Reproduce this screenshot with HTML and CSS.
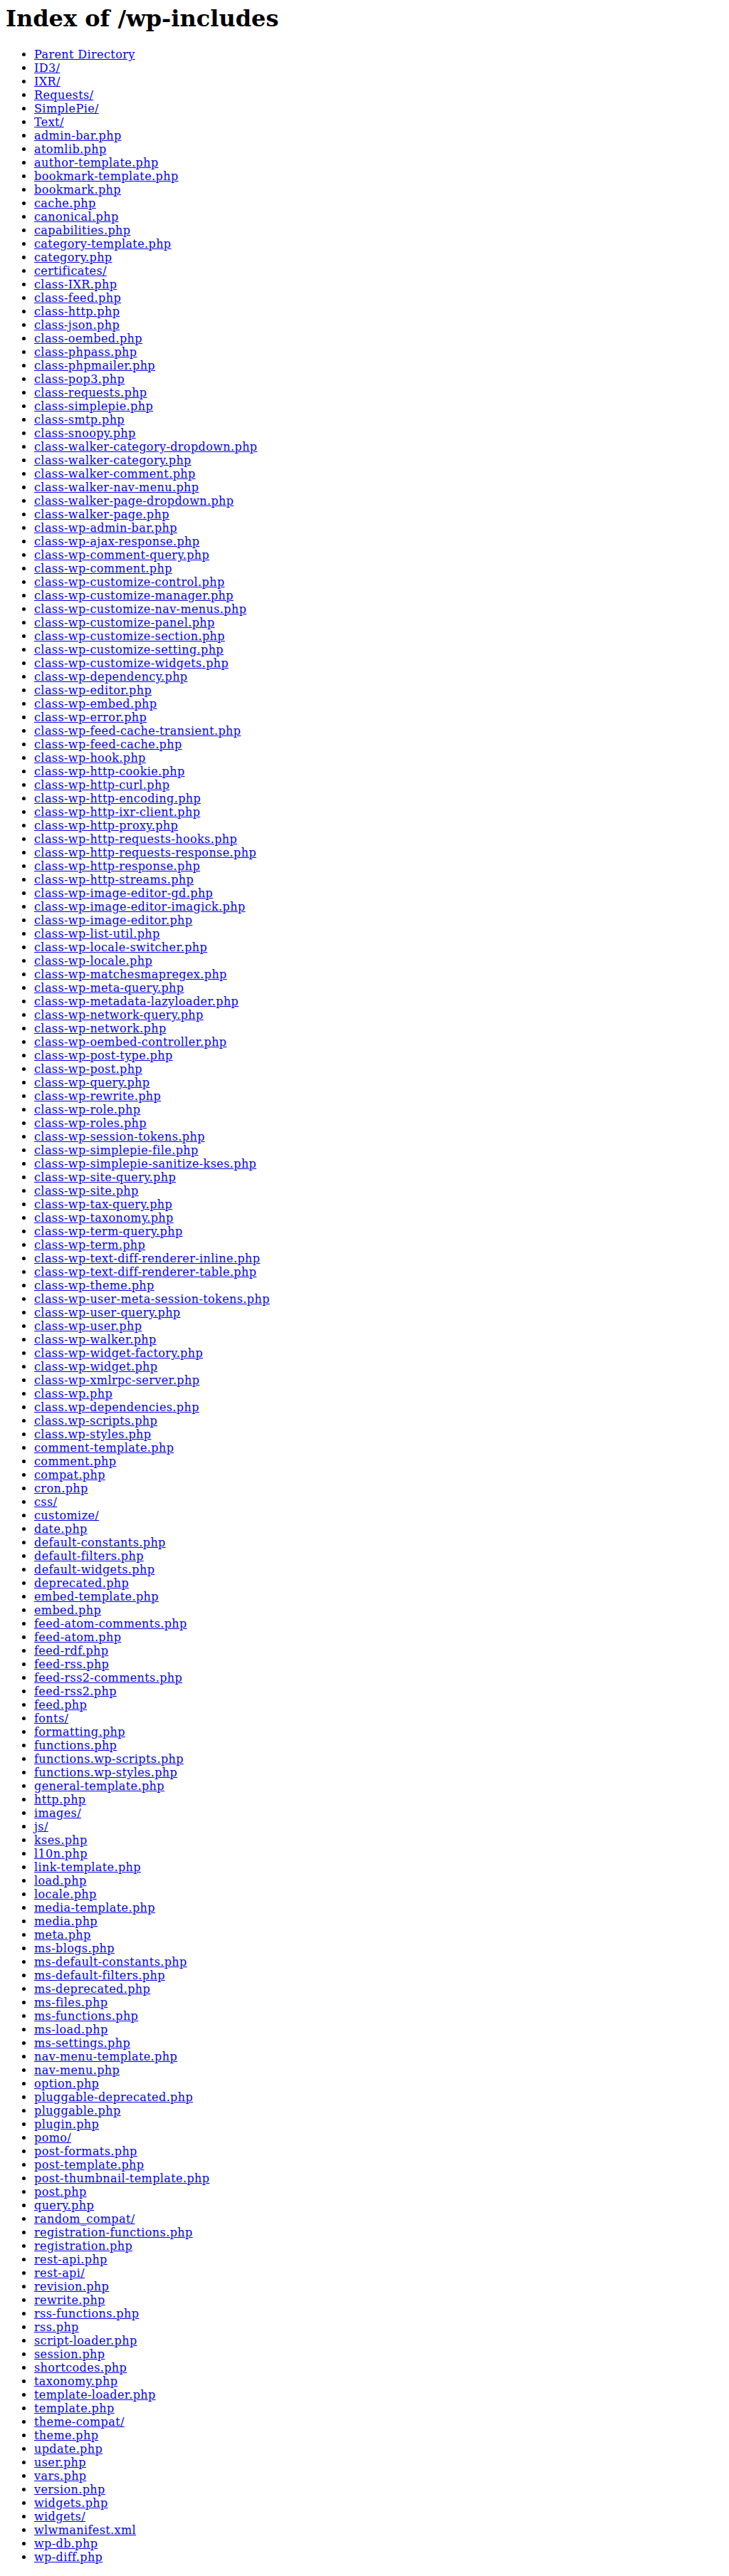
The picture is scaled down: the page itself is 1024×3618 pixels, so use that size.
FILE: index.html
```
<!DOCTYPE html>
<html>
<head>
<meta charset="utf-8">
<title>Index of /wp-includes</title>
<link rel="stylesheet" href="styles.css">
</head>
<body class="page">
<h1 class="title">Index of /wp-includes</h1>
<ul class="listing">
<li><a href="/">Parent Directory</a></li>
<li><a href="ID3/">ID3/</a></li>
<li><a href="IXR/">IXR/</a></li>
<li><a href="Requests/">Requests/</a></li>
<li><a href="SimplePie/">SimplePie/</a></li>
<li><a href="Text/">Text/</a></li>
<li><a href="admin-bar.php">admin-bar.php</a></li>
<li><a href="atomlib.php">atomlib.php</a></li>
<li><a href="author-template.php">author-template.php</a></li>
<li><a href="bookmark-template.php">bookmark-template.php</a></li>
<li><a href="bookmark.php">bookmark.php</a></li>
<li><a href="cache.php">cache.php</a></li>
<li><a href="canonical.php">canonical.php</a></li>
<li><a href="capabilities.php">capabilities.php</a></li>
<li><a href="category-template.php">category-template.php</a></li>
<li><a href="category.php">category.php</a></li>
<li><a href="certificates/">certificates/</a></li>
<li><a href="class-IXR.php">class-IXR.php</a></li>
<li><a href="class-feed.php">class-feed.php</a></li>
<li><a href="class-http.php">class-http.php</a></li>
<li><a href="class-json.php">class-json.php</a></li>
<li><a href="class-oembed.php">class-oembed.php</a></li>
<li><a href="class-phpass.php">class-phpass.php</a></li>
<li><a href="class-phpmailer.php">class-phpmailer.php</a></li>
<li><a href="class-pop3.php">class-pop3.php</a></li>
<li><a href="class-requests.php">class-requests.php</a></li>
<li><a href="class-simplepie.php">class-simplepie.php</a></li>
<li><a href="class-smtp.php">class-smtp.php</a></li>
<li><a href="class-snoopy.php">class-snoopy.php</a></li>
<li><a href="class-walker-category-dropdown.php">class-walker-category-dropdown.php</a></li>
<li><a href="class-walker-category.php">class-walker-category.php</a></li>
<li><a href="class-walker-comment.php">class-walker-comment.php</a></li>
<li><a href="class-walker-nav-menu.php">class-walker-nav-menu.php</a></li>
<li><a href="class-walker-page-dropdown.php">class-walker-page-dropdown.php</a></li>
<li><a href="class-walker-page.php">class-walker-page.php</a></li>
<li><a href="class-wp-admin-bar.php">class-wp-admin-bar.php</a></li>
<li><a href="class-wp-ajax-response.php">class-wp-ajax-response.php</a></li>
<li><a href="class-wp-comment-query.php">class-wp-comment-query.php</a></li>
<li><a href="class-wp-comment.php">class-wp-comment.php</a></li>
<li><a href="class-wp-customize-control.php">class-wp-customize-control.php</a></li>
<li><a href="class-wp-customize-manager.php">class-wp-customize-manager.php</a></li>
<li><a href="class-wp-customize-nav-menus.php">class-wp-customize-nav-menus.php</a></li>
<li><a href="class-wp-customize-panel.php">class-wp-customize-panel.php</a></li>
<li><a href="class-wp-customize-section.php">class-wp-customize-section.php</a></li>
<li><a href="class-wp-customize-setting.php">class-wp-customize-setting.php</a></li>
<li><a href="class-wp-customize-widgets.php">class-wp-customize-widgets.php</a></li>
<li><a href="class-wp-dependency.php">class-wp-dependency.php</a></li>
<li><a href="class-wp-editor.php">class-wp-editor.php</a></li>
<li><a href="class-wp-embed.php">class-wp-embed.php</a></li>
<li><a href="class-wp-error.php">class-wp-error.php</a></li>
<li><a href="class-wp-feed-cache-transient.php">class-wp-feed-cache-transient.php</a></li>
<li><a href="class-wp-feed-cache.php">class-wp-feed-cache.php</a></li>
<li><a href="class-wp-hook.php">class-wp-hook.php</a></li>
<li><a href="class-wp-http-cookie.php">class-wp-http-cookie.php</a></li>
<li><a href="class-wp-http-curl.php">class-wp-http-curl.php</a></li>
<li><a href="class-wp-http-encoding.php">class-wp-http-encoding.php</a></li>
<li><a href="class-wp-http-ixr-client.php">class-wp-http-ixr-client.php</a></li>
<li><a href="class-wp-http-proxy.php">class-wp-http-proxy.php</a></li>
<li><a href="class-wp-http-requests-hooks.php">class-wp-http-requests-hooks.php</a></li>
<li><a href="class-wp-http-requests-response.php">class-wp-http-requests-response.php</a></li>
<li><a href="class-wp-http-response.php">class-wp-http-response.php</a></li>
<li><a href="class-wp-http-streams.php">class-wp-http-streams.php</a></li>
<li><a href="class-wp-image-editor-gd.php">class-wp-image-editor-gd.php</a></li>
<li><a href="class-wp-image-editor-imagick.php">class-wp-image-editor-imagick.php</a></li>
<li><a href="class-wp-image-editor.php">class-wp-image-editor.php</a></li>
<li><a href="class-wp-list-util.php">class-wp-list-util.php</a></li>
<li><a href="class-wp-locale-switcher.php">class-wp-locale-switcher.php</a></li>
<li><a href="class-wp-locale.php">class-wp-locale.php</a></li>
<li><a href="class-wp-matchesmapregex.php">class-wp-matchesmapregex.php</a></li>
<li><a href="class-wp-meta-query.php">class-wp-meta-query.php</a></li>
<li><a href="class-wp-metadata-lazyloader.php">class-wp-metadata-lazyloader.php</a></li>
<li><a href="class-wp-network-query.php">class-wp-network-query.php</a></li>
<li><a href="class-wp-network.php">class-wp-network.php</a></li>
<li><a href="class-wp-oembed-controller.php">class-wp-oembed-controller.php</a></li>
<li><a href="class-wp-post-type.php">class-wp-post-type.php</a></li>
<li><a href="class-wp-post.php">class-wp-post.php</a></li>
<li><a href="class-wp-query.php">class-wp-query.php</a></li>
<li><a href="class-wp-rewrite.php">class-wp-rewrite.php</a></li>
<li><a href="class-wp-role.php">class-wp-role.php</a></li>
<li><a href="class-wp-roles.php">class-wp-roles.php</a></li>
<li><a href="class-wp-session-tokens.php">class-wp-session-tokens.php</a></li>
<li><a href="class-wp-simplepie-file.php">class-wp-simplepie-file.php</a></li>
<li><a href="class-wp-simplepie-sanitize-kses.php">class-wp-simplepie-sanitize-kses.php</a></li>
<li><a href="class-wp-site-query.php">class-wp-site-query.php</a></li>
<li><a href="class-wp-site.php">class-wp-site.php</a></li>
<li><a href="class-wp-tax-query.php">class-wp-tax-query.php</a></li>
<li><a href="class-wp-taxonomy.php">class-wp-taxonomy.php</a></li>
<li><a href="class-wp-term-query.php">class-wp-term-query.php</a></li>
<li><a href="class-wp-term.php">class-wp-term.php</a></li>
<li><a href="class-wp-text-diff-renderer-inline.php">class-wp-text-diff-renderer-inline.php</a></li>
<li><a href="class-wp-text-diff-renderer-table.php">class-wp-text-diff-renderer-table.php</a></li>
<li><a href="class-wp-theme.php">class-wp-theme.php</a></li>
<li><a href="class-wp-user-meta-session-tokens.php">class-wp-user-meta-session-tokens.php</a></li>
<li><a href="class-wp-user-query.php">class-wp-user-query.php</a></li>
<li><a href="class-wp-user.php">class-wp-user.php</a></li>
<li><a href="class-wp-walker.php">class-wp-walker.php</a></li>
<li><a href="class-wp-widget-factory.php">class-wp-widget-factory.php</a></li>
<li><a href="class-wp-widget.php">class-wp-widget.php</a></li>
<li><a href="class-wp-xmlrpc-server.php">class-wp-xmlrpc-server.php</a></li>
<li><a href="class-wp.php">class-wp.php</a></li>
<li><a href="class.wp-dependencies.php">class.wp-dependencies.php</a></li>
<li><a href="class.wp-scripts.php">class.wp-scripts.php</a></li>
<li><a href="class.wp-styles.php">class.wp-styles.php</a></li>
<li><a href="comment-template.php">comment-template.php</a></li>
<li><a href="comment.php">comment.php</a></li>
<li><a href="compat.php">compat.php</a></li>
<li><a href="cron.php">cron.php</a></li>
<li><a href="css/">css/</a></li>
<li><a href="customize/">customize/</a></li>
<li><a href="date.php">date.php</a></li>
<li><a href="default-constants.php">default-constants.php</a></li>
<li><a href="default-filters.php">default-filters.php</a></li>
<li><a href="default-widgets.php">default-widgets.php</a></li>
<li><a href="deprecated.php">deprecated.php</a></li>
<li><a href="embed-template.php">embed-template.php</a></li>
<li><a href="embed.php">embed.php</a></li>
<li><a href="feed-atom-comments.php">feed-atom-comments.php</a></li>
<li><a href="feed-atom.php">feed-atom.php</a></li>
<li><a href="feed-rdf.php">feed-rdf.php</a></li>
<li><a href="feed-rss.php">feed-rss.php</a></li>
<li><a href="feed-rss2-comments.php">feed-rss2-comments.php</a></li>
<li><a href="feed-rss2.php">feed-rss2.php</a></li>
<li><a href="feed.php">feed.php</a></li>
<li><a href="fonts/">fonts/</a></li>
<li><a href="formatting.php">formatting.php</a></li>
<li><a href="functions.php">functions.php</a></li>
<li><a href="functions.wp-scripts.php">functions.wp-scripts.php</a></li>
<li><a href="functions.wp-styles.php">functions.wp-styles.php</a></li>
<li><a href="general-template.php">general-template.php</a></li>
<li><a href="http.php">http.php</a></li>
<li><a href="images/">images/</a></li>
<li><a href="js/">js/</a></li>
<li><a href="kses.php">kses.php</a></li>
<li><a href="l10n.php">l10n.php</a></li>
<li><a href="link-template.php">link-template.php</a></li>
<li><a href="load.php">load.php</a></li>
<li><a href="locale.php">locale.php</a></li>
<li><a href="media-template.php">media-template.php</a></li>
<li><a href="media.php">media.php</a></li>
<li><a href="meta.php">meta.php</a></li>
<li><a href="ms-blogs.php">ms-blogs.php</a></li>
<li><a href="ms-default-constants.php">ms-default-constants.php</a></li>
<li><a href="ms-default-filters.php">ms-default-filters.php</a></li>
<li><a href="ms-deprecated.php">ms-deprecated.php</a></li>
<li><a href="ms-files.php">ms-files.php</a></li>
<li><a href="ms-functions.php">ms-functions.php</a></li>
<li><a href="ms-load.php">ms-load.php</a></li>
<li><a href="ms-settings.php">ms-settings.php</a></li>
<li><a href="nav-menu-template.php">nav-menu-template.php</a></li>
<li><a href="nav-menu.php">nav-menu.php</a></li>
<li><a href="option.php">option.php</a></li>
<li><a href="pluggable-deprecated.php">pluggable-deprecated.php</a></li>
<li><a href="pluggable.php">pluggable.php</a></li>
<li><a href="plugin.php">plugin.php</a></li>
<li><a href="pomo/">pomo/</a></li>
<li><a href="post-formats.php">post-formats.php</a></li>
<li><a href="post-template.php">post-template.php</a></li>
<li><a href="post-thumbnail-template.php">post-thumbnail-template.php</a></li>
<li><a href="post.php">post.php</a></li>
<li><a href="query.php">query.php</a></li>
<li><a href="random_compat/">random_compat/</a></li>
<li><a href="registration-functions.php">registration-functions.php</a></li>
<li><a href="registration.php">registration.php</a></li>
<li><a href="rest-api.php">rest-api.php</a></li>
<li><a href="rest-api/">rest-api/</a></li>
<li><a href="revision.php">revision.php</a></li>
<li><a href="rewrite.php">rewrite.php</a></li>
<li><a href="rss-functions.php">rss-functions.php</a></li>
<li><a href="rss.php">rss.php</a></li>
<li><a href="script-loader.php">script-loader.php</a></li>
<li><a href="session.php">session.php</a></li>
<li><a href="shortcodes.php">shortcodes.php</a></li>
<li><a href="taxonomy.php">taxonomy.php</a></li>
<li><a href="template-loader.php">template-loader.php</a></li>
<li><a href="template.php">template.php</a></li>
<li><a href="theme-compat/">theme-compat/</a></li>
<li><a href="theme.php">theme.php</a></li>
<li><a href="update.php">update.php</a></li>
<li><a href="user.php">user.php</a></li>
<li><a href="vars.php">vars.php</a></li>
<li><a href="version.php">version.php</a></li>
<li><a href="widgets.php">widgets.php</a></li>
<li><a href="widgets/">widgets/</a></li>
<li><a href="wlwmanifest.xml">wlwmanifest.xml</a></li>
<li><a href="wp-db.php">wp-db.php</a></li>
<li><a href="wp-diff.php">wp-diff.php</a></li>
</ul>
</body>
</html>
```
FILE: styles.css
```
html {
  background: #ffffff;
}
.page {
  margin: 8px;
  font-family: "DejaVu Serif", serif;
  font-size: 16px;
  color: #000000;
}
.title {
  font-size: 32px;
  line-height: 37px;
  font-weight: bold;
  margin: 0 0 22px;
}
.listing {
  margin: 0;
  padding-left: 40px;
  list-style: disc;
}
.listing li {
  line-height: 19px;
}
.listing a {
  color: #0000ee;
  text-decoration: underline;
  letter-spacing: 0.4px;
}
```
